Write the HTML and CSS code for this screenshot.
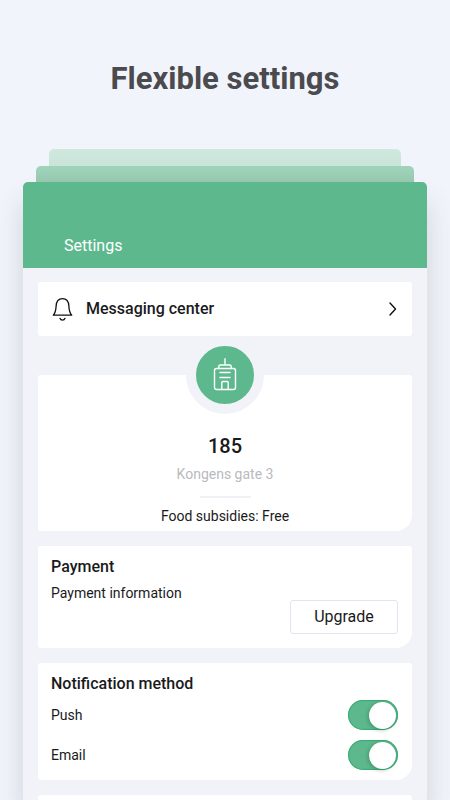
FILE: index.html
```html
<!DOCTYPE html>
<html lang="en">
<head>
<meta charset="utf-8">
<meta name="viewport" content="width=device-width, initial-scale=1">
<title>Flexible settings</title>
<link rel="stylesheet" href="styles.css">
</head>
<body>
<h1 class="headline">Flexible settings</h1>
<div class="stack">
  <div class="layer layer-back"></div>
  <div class="layer layer-middle"></div>
  <main class="screen">
    <header class="topbar"><h2 class="topbar-title">Settings</h2></header>
    <div class="cards">
      <a class="card message-link" href="#messages">
        <svg class="bell" viewBox="0 0 22 24" width="22" height="24" aria-hidden="true">
          <path d="M1.300 18.200h18.400c-2-2.200-2.600-4.600-2.800-9C16.700 4.400 14.500 1.700 10.500 1.700S4.300 4.400 4.100 9.200c-.2 4.400-.8 6.800-2.800 9z"/>
          <path d="M8 21.300c.4 1.200 1.300 1.800 2.500 1.800s2.100-.6 2.500-1.800"/>
        </svg>
        <span class="message-text">Messaging center</span>
        <svg class="chevron" viewBox="0 0 8 14" width="8" height="14" aria-hidden="true"><path d="M1 1l5.500 6L1 13"/></svg>
      </a>

      <section class="card profile">
        <div class="badge">
          <svg viewBox="0 0 24 34" width="24" height="34" aria-hidden="true">
            <path d="M12 .8v6M5.800 10.500V8.500Q5.800 7 7.300 7h9.400q1.500 0 1.500 1.500v2"/>
            <rect x="1.500" y="10.500" width="21" height="21" rx="2"/>
            <path d="M7 14.500h10M7 19.500h10M8.800 31.500v-7q0-1 1-1h4.400q1 0 1 1v7"/>
          </svg>
        </div>
        <h3 class="profile-number">185</h3>
        <p class="profile-address">Kongens gate 3</p>
        <hr class="divider">
        <p class="profile-note">Food subsidies: Free</p>
      </section>

      <section class="card payment">
        <h3 class="card-title">Payment</h3>
        <p class="card-text">Payment information</p>
        <button class="upgrade" type="button">Upgrade</button>
      </section>

      <section class="card notifications">
        <h3 class="card-title">Notification method</h3>
        <div class="option">
          <label for="push">Push</label>
          <input class="switch" type="checkbox" role="switch" id="push" checked>
        </div>
        <div class="option">
          <label for="email">Email</label>
          <input class="switch" type="checkbox" role="switch" id="email" checked>
        </div>
      </section>

      <section class="card next-card"></section>
    </div>
  </main>
</div>
</body>
</html>
```
FILE: styles.css
```css
* {
  box-sizing: border-box;
}

body {
  display: flex;
  flex-direction: column;
  min-height: 100vh;
  margin: 0;
  overflow-x: hidden;
  background: #f1f4fa;
  color: #1a1a1c;
  font-family: Roboto, "Liberation Sans", sans-serif;
  font-size: 14px;
  line-height: 20px;
}

h1, h2, h3, p {
  margin: 0;
}

.headline {
  padding: 59px 0 50px;
  text-align: center;
  font-size: 31px;
  line-height: 40px;
  font-weight: 700;
  color: #4a4a4f;
}

.stack {
  display: flex;
  flex: 1;
  flex-direction: column;
  padding: 0 23px;
}

.layer {
  height: 16px;
  border-radius: 5px 5px 0 0;
}

.layer-back {
  height: 17px;
  margin: 0 26px;
  background: linear-gradient(#cfe9df, #cae4d9);
}

.layer-middle {
  margin: 0 13px;
  background: linear-gradient(#9fd4bb, #98c9b1);
}

.screen {
  display: flex;
  flex: 1;
  flex-direction: column;
  border-radius: 5px 5px 0 0;
  background: #f2f3f8;
  box-shadow: 0 20px 28px rgba(60, 62, 70, 0.18);
}

.topbar {
  display: flex;
  align-items: flex-end;
  height: 86px;
  padding: 0 41px 12px;
  border-radius: 5px 5px 0 0;
  background: #5db98d;
}

.topbar-title {
  font-size: 16px;
  line-height: 20px;
  font-weight: 400;
  color: #fff;
}

.cards {
  display: flex;
  flex: 1;
  flex-direction: column;
  gap: 15px;
  padding: 14px 15px 0;
}

.card {
  padding: 10px 14px 14px 13px;
  border-radius: 3px 3px 16px 3px;
  background: #fff;
}

.message-link {
  display: flex;
  align-items: center;
  height: 54px;
  padding: 0 15px 0 14px;
  border-radius: 3px;
  color: inherit;
  text-decoration: none;
}

.message-text {
  flex: 1;
  margin-left: 12px;
  font-size: 16px;
  font-weight: 500;
}

.bell,
.chevron,
.badge svg {
  fill: none;
  stroke: #111;
  stroke-linecap: round;
  stroke-linejoin: round;
}

.bell {
  stroke-width: 1.3;
}

.chevron {
  stroke-width: 1.4;
}

.profile {
  display: flex;
  flex-direction: column;
  align-items: center;
  height: 156px;
  margin-top: 24px;
  padding: 0;
}

.badge {
  display: flex;
  align-items: center;
  justify-content: center;
  width: 78px;
  height: 78px;
  margin-top: -39px;
  border: 10px solid #f2f3f8;
  border-radius: 50%;
  background: #5db98d;
}

.badge svg {
  stroke: #fff;
  stroke-width: 1.4;
}

.profile-number {
  margin-top: 20px;
  font-size: 20px;
  line-height: 24px;
  font-weight: 500;
}

.profile-address {
  margin-top: 6px;
  color: #b9babd;
}

.divider {
  width: 51px;
  height: 2px;
  margin: 12px 0 8px;
  border: 0;
  background: #f0f1f7;
}

.card-title {
  font-size: 16px;
  line-height: 22px;
  font-weight: 500;
}

.payment {
  display: flex;
  flex-direction: column;
}

.card-text {
  margin-top: 5px;
}

.upgrade {
  align-self: flex-end;
  width: 108px;
  height: 34px;
  margin-top: -3px;
  padding: 0;
  border: 1px solid #e2e6f0;
  border-radius: 3px;
  background: #fff;
  color: #1a1a1c;
  font: 400 16px/20px Roboto, "Liberation Sans", sans-serif;
}

.notifications {
  padding-bottom: 5px;
}

.option {
  display: flex;
  align-items: center;
  justify-content: space-between;
  height: 40px;
}

.switch {
  appearance: none;
  display: flex;
  align-items: center;
  justify-content: flex-end;
  width: 50px;
  height: 30px;
  margin: 0;
  padding: 0 2px;
  border-radius: 15px;
  background: #5db98d;
  box-shadow: inset 0 0 1px 1px #36ac74;
}

.switch::before {
  content: "";
  width: 27px;
  height: 27px;
  border-radius: 50%;
  background: #fff;
  box-shadow: -1px 1px 4px rgba(0, 60, 30, 0.3);
}

.switch:not(:checked) {
  justify-content: flex-start;
  background: #d5d8e0;
  box-shadow: none;
}

.next-card {
  flex: 1;
  padding: 0;
  border-radius: 3px 3px 0 0;
}
```
